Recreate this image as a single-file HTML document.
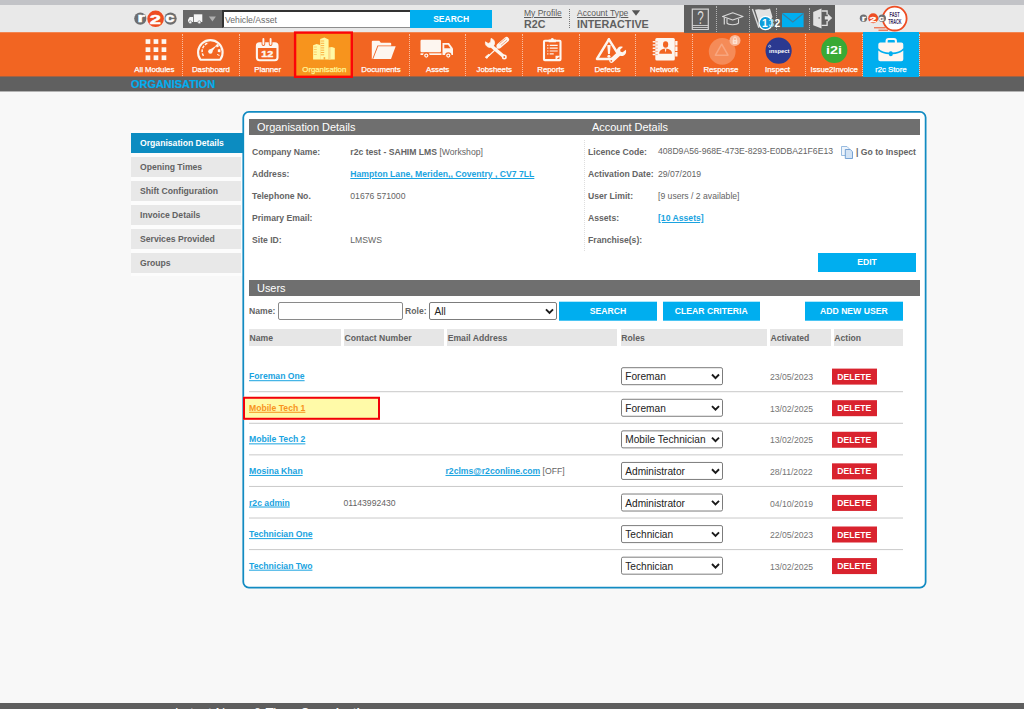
<!DOCTYPE html>
<html><head><meta charset="utf-8">
<style>
*{box-sizing:border-box;margin:0;padding:0}
html,body{width:1024px;height:709px;overflow:hidden}
body{background:#f8f8f8;font-family:"Liberation Sans",sans-serif;font-size:11px;color:#555;position:relative}
.abs{position:absolute}
#topstrip{left:0;top:0;width:1024px;height:5px;background:#c2c3c7}
#hdr{left:0;top:5px;width:1024px;height:27px;background:#e9e9e9}
#nav{left:0;top:32px;width:1024px;height:45px;background:#f26522}
#sub{left:0;top:76px;width:1024px;height:15px;background:#606060;transform:translateY(.450px)}
#sub span{-webkit-text-stroke:.2px #00aeef;position:absolute;left:131px;top:.600px;font-size:10.95px;font-weight:bold;color:#00aeef;line-height:15px}
.ni{position:absolute;top:32px;height:45px;width:56.6px;border-left:1px dotted #f9c4a6;color:#fff;text-align:center}
.ni .lb{position:absolute;left:-10px;right:-10px;bottom:3px;font-size:8.5px;line-height:10px;white-space:nowrap;letter-spacing:-0.2px}
.ni svg{position:absolute;left:50%;top:4px;transform:translateX(-50%)}
#footer{left:0;top:703.200px;width:1024px;height:6px;background:#5e5e5e;overflow:hidden}
/* sidebar */
.tab{position:absolute;left:131px;width:110px;height:20px;background:#e8e8e8;color:#626262;font-weight:bold;font-size:8.65px;line-height:21px;padding-left:9px;white-space:nowrap}
.tab.act{background:#0c8cc1;color:#fff;width:113px}
#tabsbg{left:131px;top:130px;width:112px;height:146px;background:#fcfcfc}
#panel{left:243px;top:111px;width:684px;height:478px;background:#fff;border:2px solid #1b8dc2;border-radius:8px}
.sh{position:absolute;left:249px;width:671px;height:16px;background:#6f6f6f;color:#fff;font-size:10.95px;line-height:16px}
.sh span{position:absolute;top:0}
.l{position:absolute;font-weight:bold;color:#646464;font-size:8.65px;white-space:nowrap;line-height:12px}
.v{position:absolute;color:#646464;font-size:8.65px;white-space:nowrap;line-height:12px}
a,.a{color:#1aa3e0;text-decoration:underline;font-weight:bold}
.btn{position:absolute;background:#00aeef;color:#fff;font-weight:bold;font-size:8.65px;text-align:center;white-space:nowrap}
.th{position:absolute;top:328.600px;height:17.200px;background:#e6e6e6;color:#606060;font-weight:bold;font-size:8.65px;line-height:18.600px;white-space:nowrap;padding-left:.500px}
.sep{position:absolute;left:249px;width:654px;height:1px;background:#c9c9c9}
.sel{position:absolute;left:620.800px;width:102px;height:17.700px;border:1px solid #7c7c7c;border-radius:2px;background:#fff;color:#222;font-size:10.150px;line-height:17px;padding-left:3.500px;white-space:nowrap;overflow:hidden}
.sel svg,.chev{position:absolute;right:2px;top:5px}
.del{position:absolute;left:831.800px;width:45px;height:15.700px;background:#d9232e;color:#fff;font-weight:bold;font-size:8.65px;line-height:16px;text-align:center}
.dt{position:absolute;left:770px;color:#757575;font-size:8.65px;line-height:12px}
.hs{top:8px;width:0;height:22px;border-left:1px dotted #b4b4b4}
.nd{top:33.500px;width:0;height:42px;border-left:1px dotted #f9bea2}
.nl{-webkit-text-stroke:.250px currentColor;top:64.800px;width:56.600px;text-align:center;font-size:7.850px;line-height:10px;white-space:nowrap;letter-spacing:-.05px}
.row{position:absolute;left:0;top:0;width:1024px;height:0}
</style></head><body>
<div class="abs" id="topstrip"></div>
<div class="abs" id="hdr"></div>
<div class="abs" id="nav"></div>
<div class="abs" style="left:0;top:32px;width:1024px;height:1px;background:#f3844f"></div>
<div class="abs" id="sub"><span>ORGANISATION</span></div>
<svg class="abs" style="left:130px;top:4px" width="54" height="30" viewBox="0 0 54 30">
<circle cx="10.300" cy="14.600" r="6.100" fill="#6d6e70"/><circle cx="40.500" cy="14.600" r="6.200" fill="#6d6e70"/><circle cx="25.600" cy="14.800" r="8.900" fill="#f3ebe8"/><circle cx="25.600" cy="14.800" r="8.300" fill="#ee4d23"/>
<g font-family="Liberation Sans" font-weight="bold" fill="#fff" stroke="#fff" stroke-width=".5">
<text transform="translate(7.400 18) scale(1.550 1)" font-size="12.300">r</text>
<text transform="translate(19.800 19.500) scale(1.500 1)" font-size="13.400">2</text>
<text transform="translate(35.200 18) scale(1.350 1)" font-size="12.300">c</text></g></svg>
<div class="abs" style="left:183px;top:10px;width:39px;height:17.500px;background:#676767"></div>
<svg class="abs" style="left:186px;top:12px" width="18" height="13" viewBox="0 0 18 13"><path d="M7.800 2.300h8.500v7.700H7.800z" fill="#f6f6f6"/><path d="M2 10V7.800l1.700-2.700H7v4.900z" fill="#f6f6f6"/><circle cx="4.200" cy="10.300" r="1.500" fill="#f6f6f6" stroke="#6d6e70" stroke-width=".6"/><circle cx="13.300" cy="10.300" r="1.500" fill="#f6f6f6" stroke="#6d6e70" stroke-width=".6"/></svg>
<svg class="abs" style="left:208px;top:16px" width="9" height="6" viewBox="0 0 9 6"><path d="M.9.600h7L4.400 5.600z" fill="#b0b0b0"/></svg>
<div class="abs" style="left:221.500px;top:10px;width:189px;height:17.500px;background:#fff;border:1px solid #8d8d8d;border-top:2px solid #333;border-left:2px solid #333;font-size:8.670px;color:#6a6a6a;line-height:16.500px;padding-left:1.500px">Vehicle/Asset</div>
<div class="btn" style="left:410px;top:9.500px;width:82.300px;height:18.300px;line-height:19px;font-size:8.500px">SEARCH</div>
<div class="abs" style="left:524px;top:7.500px;font-size:8.500px;line-height:10px;color:#5a5a5a;text-decoration:underline;white-space:nowrap">My Profile</div>
<div class="abs" style="left:524px;top:18px;font-size:10.700px;line-height:12px;color:#606060;font-weight:bold;white-space:nowrap">R2C</div>
<div class="abs" style="left:569px;top:9px;width:0;height:19px;border-left:1px dotted #777"></div>
<div class="abs" style="left:577px;top:7.500px;font-size:8.500px;line-height:10px;color:#5a5a5a;white-space:nowrap"><span style="text-decoration:underline">Account Type</span></div>
<svg class="abs" style="left:631px;top:10px" width="10" height="7" viewBox="0 0 10 7"><path d="M.8.200h8.400L5 5.800z" fill="#555"/></svg>
<div class="abs" style="left:577px;top:18px;font-size:10.770px;line-height:12px;color:#606060;font-weight:bold;white-space:nowrap">INTERACTIVE</div>
<div class="abs" style="left:684px;top:5.300px;width:151px;height:26.700px;background:#5f5f5f"></div>
<div class="abs hs" style="left:716px;top:5.500px;height:26.500px"></div><div class="abs hs" style="left:749px;top:5.500px;height:26.500px"></div><div class="abs hs" style="left:776px"></div><div class="abs hs" style="left:809px"></div>
<svg class="abs" style="left:684px;top:4px" width="151" height="30" viewBox="0 0 151 30">
<path d="M8.300 5.200h16v20.300h-16z" fill="none" stroke="#d4d4d4" stroke-width="1.200"/><path d="M8.300 21.500h16M8.300 23.500h16" fill="none" stroke="#d4d4d4" stroke-width=".9"/>
<text x="16.500" y="19.700" font-family="Liberation Sans" font-size="17.500" fill="#dcdcdc" text-anchor="middle" textLength="6.500" lengthAdjust="spacingAndGlyphs">?</text>
<path d="M38.500 12.600l10.200-3.900 10.300 3.900-10.300 3.400z" fill="none" stroke="#d8d8d8" stroke-width="1.100" stroke-linejoin="round"/><path d="M43 14.800v4.400c1.500 2 9.500 2 11.500 0v-4.400" fill="none" stroke="#d8d8d8" stroke-width="1.100"/><path d="M40.300 13.500v7" fill="none" stroke="#d8d8d8" stroke-width="1.200"/>
<path d="M68.400 5.100l6.500 18.600" stroke="#dadada" stroke-width="1.400" fill="none"/><path d="M71 5.800c4.500-2 9 1.500 15-1.200l2.500 8.500c-1.500 4-7 5-10.500 4.500l-3 1z" fill="#e2e2e2"/>
<circle cx="81.600" cy="19" r="6.600" fill="#0e9ddb" stroke="#fff" stroke-width="1.300"/>
<text x="78" y="22.700" font-family="Liberation Sans" font-weight="bold" font-size="10.300" fill="#fff">1</text><text x="84.600" y="22.700" font-family="Liberation Sans" font-weight="bold" font-size="10.300" fill="#9adcf7">3</text><text x="90.500" y="22.700" font-family="Liberation Sans" font-weight="bold" font-size="10.300" fill="#fff">2</text>
<rect x="98" y="9" width="21.600" height="14.200" fill="#00aeef"/><path d="M98 9.200l10.800 8.800 10.800-8.800" fill="none" stroke="#3b7f9e" stroke-width="1.100"/>
<path d="M129.200 7.900l8.300-3.300v20l-8.300-3.300z" fill="#e2e2e2"/><path d="M137.500 7h5.600v3.800M143.100 17v4.300h-5.600" fill="none" stroke="#e2e2e2" stroke-width="1.300"/><path d="M140.800 12.300h3v-2.600l4.400 4.200-4.400 4.200v-2.600h-3z" fill="#e2e2e2"/><rect x="134.500" y="13.300" width="1.300" height="1.300" fill="#5f5f5f"/></svg>
<svg class="abs" style="left:856px;top:3px" width="56" height="34" viewBox="0 0 56 34">
<circle cx="38.700" cy="15.600" r="11.900" fill="#fff" stroke="#ee4d23" stroke-width="1.800"/>
<circle cx="7.500" cy="15.200" r="3.700" fill="#6d6e70"/><circle cx="26.200" cy="15.200" r="3.800" fill="#6d6e70"/><circle cx="17.200" cy="15.300" r="5" fill="#ee4d23"/>
<g font-family="Liberation Sans" font-weight="bold" fill="#fff" stroke="#fff" stroke-width=".3">
<text transform="translate(5.800 17.700) scale(1.500 1)" font-size="7">r</text>
<text transform="translate(13.400 18.700) scale(1.550 1)" font-size="8">2</text>
<text transform="translate(22.700 17.700) scale(1.350 1)" font-size="7">c</text></g>
<text x="38.600" y="14" font-family="Liberation Sans" font-weight="bold" font-size="6.300" fill="#3a2a5a" text-anchor="middle" textLength="10" lengthAdjust="spacingAndGlyphs">FAST</text>
<text x="38.800" y="21.200" font-family="Liberation Sans" font-weight="bold" font-size="6.300" fill="#3a2a5a" text-anchor="middle" textLength="13.300" lengthAdjust="spacingAndGlyphs">TRACK</text>
<path d="M18 24.800h11.500M22.500 27.200h9.500" stroke="#ee4d23" stroke-width="1"/></svg>
<div class="abs" style="left:863px;top:32px;width:55.500px;height:44.500px;background:#00aeef"></div>
<svg class="abs" style="left:290px;top:28px" width="68" height="54" viewBox="290 28 68 54"><rect x="295.100" y="32.600" width="56.700" height="44.200" fill="#f7941d" stroke="#fb0408" stroke-width="2.400"/></svg>
<svg class="abs" style="left:126.00px;top:32px" width="56.600" height="45" viewBox="0 0 56.600 45"><rect x="19.6" y="7.2" width="4.700" height="4.700" fill="#fdf6f0"/><rect x="27.6" y="7.2" width="4.700" height="4.700" fill="#fdf6f0"/><rect x="35.6" y="7.2" width="4.700" height="4.700" fill="#fdf6f0"/><rect x="19.6" y="15.3" width="4.700" height="4.700" fill="#fdf6f0"/><rect x="27.6" y="15.3" width="4.700" height="4.700" fill="#fdf6f0"/><rect x="35.6" y="15.3" width="4.700" height="4.700" fill="#fdf6f0"/><rect x="19.6" y="23.4" width="4.700" height="4.700" fill="#fdf6f0"/><rect x="27.6" y="23.4" width="4.700" height="4.700" fill="#fdf6f0"/><rect x="35.6" y="23.4" width="4.700" height="4.700" fill="#fdf6f0"/></svg><div class="abs nl" style="left:126.00px;color:#fff">All Modules</div>
<div class="abs nd" style="left:182.16px"></div><svg class="abs" style="left:182.66px;top:32px" width="56.600" height="45" viewBox="0 0 56.600 45"><g transform="translate(-.9 .3)"><path d="M18.300 27.400a12.300 12.300 0 1 1 19.900 0z" fill="none" stroke="#fdf6f0" stroke-width="2.100" stroke-linejoin="round"/><path d="M21.400 23.600a8.600 8.600 0 0 1 5-13" fill="none" stroke="#fdf6f0" stroke-width="1.500" stroke-dasharray="2.800 1.200"/><path d="M34.300 12.500a8.600 8.600 0 0 1 1.700 10.500" fill="none" stroke="#fdf6f0" stroke-width="2.600" stroke-dasharray="2.600 2.600"/><circle cx="28.300" cy="19.200" r="2.200" fill="#fdf6f0"/><path d="M27.200 17.800l7.800-5-5.800 7.400z" fill="#fdf6f0"/></g></svg><div class="abs nl" style="left:182.66px;color:#fff">Dashboard</div>
<div class="abs nd" style="left:238.82px"></div><svg class="abs" style="left:239.32px;top:32px" width="56.600" height="45" viewBox="0 0 56.600 45"><rect x="17.900" y="11.300" width="20.600" height="16.900" rx="2.600" fill="none" stroke="#fdf6f0" stroke-width="2.100"/><path d="M17.900 16V14a2.600 2.600 0 0 1 2.600-2.600h15.400a2.600 2.600 0 0 1 2.600 2.600v2z" fill="#fdf6f0"/><path d="M24.400 7.300v5M31.600 7.300v5" stroke="#f26522" stroke-width="3.600" stroke-linecap="round"/><path d="M24.400 7v5M31.600 7v5" stroke="#fdf6f0" stroke-width="1.900" stroke-linecap="round"/><text x="28.300" y="24.900" font-family="Liberation Sans" font-weight="bold" font-size="9.800" fill="#fdf6f0" stroke="#fdf6f0" stroke-width=".4" text-anchor="middle" textLength="12" lengthAdjust="spacingAndGlyphs">12</text></svg><div class="abs nl" style="left:239.32px;color:#fff">Planner</div>
<svg class="abs" style="left:295.98px;top:32px" width="56.600" height="45" viewBox="0 0 56.600 45"><path d="M17.100 27.600V13.200l3.500-1.200 3.600 1v14.600z" fill="#fff9a6"/><path d="M24.200 27.600V7l4.200-1.600 4.200 2v20.200z" fill="#fff9a6"/><path d="M32.600 27.600V15.800l3.300-.8 2.900.9v11.700z" fill="#fff9a6"/><path d="M32.600 16v11.600h2V15.500z" fill="#fbd98a"/><path d="M17.800 15h3M17.800 17.500h3M17.800 20h3M17.800 22.500h3" stroke="#fbc45a" stroke-width=".8"/><path d="M24.800 9h3.400M24.800 11.300h3.400M24.800 13.600h3.400M24.800 15.900h3.400M24.800 18.200h3.400M24.800 20.500h3.400M24.800 22.800h3.400" stroke="#f9a93a" stroke-width=".9"/><path d="M27.600 27.600v-2.500h1.600v2.500z" fill="#f9a93a"/></svg><div class="abs nl" style="left:295.98px;color:#fff79a">Organisation</div>
<svg class="abs" style="left:352.64px;top:32px" width="56.600" height="45" viewBox="0 0 56.600 45"><path d="M18.800 27V9.800a1 1 0 0 1 1-1h6.500l1.500 2h9.400a1 1 0 0 1 1 1v1.700H24.500l-5.200 13.500z" fill="#fdf6f0"/><path d="M25.200 14.300h17.500l-4.700 12.700H20.200z" fill="#fdf6f0"/></svg><div class="abs nl" style="left:352.64px;color:#fff">Documents</div>
<div class="abs nd" style="left:408.80px"></div><svg class="abs" style="left:409.30px;top:32px" width="56.600" height="45" viewBox="0 0 56.600 45"><rect x="11.500" y="7.800" width="20.500" height="12.500" rx="1.200" fill="#fdf6f0"/><path d="M33.500 11h6.500l4 5.500v6.500h-10.500z" fill="#fdf6f0"/><path d="M35.300 12.700h3.700l2.500 3.500h-6.200z" fill="#f26522"/><path d="M11.500 21.300h21v1.700h-21z" fill="#fdf6f0"/><circle cx="17.300" cy="23.600" r="2.700" fill="#fdf6f0" stroke="#f26522" stroke-width="1.100"/><circle cx="39.300" cy="23.600" r="2.700" fill="#fdf6f0" stroke="#f26522" stroke-width="1.100"/><circle cx="17.300" cy="23.600" r=".9" fill="#f26522"/><circle cx="39.300" cy="23.600" r=".9" fill="#f26522"/></svg><div class="abs nl" style="left:409.30px;color:#fff">Assets</div>
<div class="abs nd" style="left:465.46px"></div><svg class="abs" style="left:465.96px;top:32px" width="56.600" height="45" viewBox="0 0 56.600 45"><path d="M32.700 14.500L22.700 23.900" stroke="#fdf6f0" stroke-width="1.300"/><path d="M23.600 23l-2.800 3.400-1.400-1.400 3.400-2.800z" fill="#fdf6f0" stroke="#fdf6f0" stroke-width="1"/><path d="M33 14l7.600-6.500" stroke="#fdf6f0" stroke-width="5" stroke-linecap="round"/><path d="M33.500 11.500l6-5M35 13.300l6-5M36.400 15l5.800-4.800" stroke="#f26522" stroke-width=".55"/><path d="M26 14.500L38.300 25" stroke="#fdf6f0" stroke-width="3.500" stroke-linecap="round"/><circle cx="38.300" cy="25" r="2.500" fill="#fdf6f0"/><circle cx="38.300" cy="25" r=".9" fill="#f26522"/><path d="M19.500 9.800a4.600 4.600 0 1 0 5.600-3.400l-.4 3.900-2.500 1.200z" fill="#fdf6f0" stroke="#fdf6f0" stroke-width=".8" stroke-linejoin="round"/></svg><div class="abs nl" style="left:465.96px;color:#fff">Jobsheets</div>
<div class="abs nd" style="left:522.12px"></div><svg class="abs" style="left:522.62px;top:32px" width="56.600" height="45" viewBox="0 0 56.600 45"><g transform="translate(1.200 .4)"><rect x="19.800" y="8.300" width="16.500" height="19.400" rx=".8" fill="none" stroke="#fdf6f0" stroke-width="2.100"/><path d="M24.500 9.800V7.200h2a1.600 1.600 0 0 1 3.200 0h2v2.600z" fill="#fdf6f0"/><path d="M23 13h1.200M25.500 13h8M23 15.800h1.200M25.500 15.800h8M23 18.600h1.200M25.500 18.600h8M23 21.400h1.200M25.500 21.400h4" stroke="#fdf6f0" stroke-width="1.200"/><path d="M31.300 27.700v-4.400h5z" fill="#fdf6f0"/></g></svg><div class="abs nl" style="left:522.62px;color:#fff">Reports</div>
<div class="abs nd" style="left:578.78px"></div><svg class="abs" style="left:579.28px;top:32px" width="56.600" height="45" viewBox="0 0 56.600 45"><path d="M29.900 7.400L18 26.900h17" fill="none" stroke="#fdf6f0" stroke-width="2.500" stroke-linejoin="round" stroke-linecap="round"/><path d="M29.900 7.400l8 12.800" fill="none" stroke="#fdf6f0" stroke-width="2.500" stroke-linecap="round"/><path d="M28.300 13h3.300l-.7 9h-1.900z" fill="#fdf6f0"/><circle cx="29.900" cy="24.300" r="1.500" fill="#fdf6f0"/><path d="M46.800 17.800c.7 1.700.3 3.700-1 5-1.300 1.300-3.100 1.600-4.700 1l-7.300 6.600a2.300 2.300 0 0 1-3.200-3.200l7.300-6.600c-.6-1.600-.2-3.400 1-4.700 1.300-1.300 3.300-1.700 5-1l-2.800 2.800.5 2 2 .5z" fill="#fdf6f0"/><circle cx="32.300" cy="28.800" r=".9" fill="#f26522"/></svg><div class="abs nl" style="left:579.28px;color:#fff">Defects</div>
<div class="abs nd" style="left:635.44px"></div><svg class="abs" style="left:635.94px;top:32px" width="56.600" height="45" viewBox="0 0 56.600 45"><rect x="19.300" y="6" width="19.500" height="22.500" rx="1.500" fill="#fdf6f0"/><path d="M39.200 9h2.300v4.500h-2.300zM39.200 14.500h2.300v4.500h-2.300zM39.200 20h2.300v4.500h-2.300z" fill="#fdf6f0"/><path d="M17.300 9.800h4M17.300 13h4M17.300 16.200h4M17.300 19.400h4M17.300 22.600h4" stroke="#fdf6f0" stroke-width="1.500" stroke-linecap="round"/><path d="M19.300 9.800h2.500M19.300 13h2.500M19.300 16.200h2.500M19.300 19.400h2.500M19.300 22.600h2.500" stroke="#f26522" stroke-width=".5"/><ellipse cx="29.600" cy="12.500" rx="2.600" ry="3.300" fill="#f26522"/><path d="M23.200 21.800c0-3.500 2.500-5 6.400-5s6.400 1.500 6.400 5z" fill="#f26522"/><path d="M29.600 16.800l-.8.800.8 3 .8-3z" fill="#fdf6f0"/></svg><div class="abs nl" style="left:635.94px;color:#fff">Network</div>
<div class="abs nd" style="left:692.10px"></div><svg class="abs" style="left:692.60px;top:32px" width="56.600" height="45" viewBox="0 0 56.600 45"><circle cx="29.200" cy="19.400" r="13.400" fill="#f58b58"/><path d="M28.700 12.200l6.300 11h-12.600z" fill="none" stroke="#f8a67f" stroke-width="1.500" stroke-linejoin="round"/><circle cx="42" cy="8.400" r="5.500" fill="#f9b898"/><rect x="39.700" y="8" width="4.600" height="3.900" rx=".6" fill="#fde3d4"/><path d="M40.600 8V6.500a1.400 1.400 0 0 1 2.800 0V8" fill="none" stroke="#fde3d4" stroke-width=".9"/><rect x="41.500" y="9" width="1" height="1.800" fill="#f9b898"/></svg><div class="abs nl" style="left:692.60px;color:#fff">Response</div>
<div class="abs nd" style="left:748.76px"></div><svg class="abs" style="left:749.26px;top:32px" width="56.600" height="45" viewBox="0 0 56.600 45"><circle cx="29.600" cy="18.700" r="13.100" fill="#2b3990"/><text x="30.300" y="21" font-family="Liberation Sans" font-weight="bold" font-size="6.200" fill="#fff" text-anchor="middle" textLength="20.500" lengthAdjust="spacingAndGlyphs">ınspect</text><circle cx="20.700" cy="14.300" r="1.100" fill="none" stroke="#fff" stroke-width=".6"/></svg><div class="abs nl" style="left:749.26px;color:#fff">Inspect</div>
<div class="abs nd" style="left:805.42px"></div><svg class="abs" style="left:805.92px;top:32px" width="56.600" height="45" viewBox="0 0 56.600 45"><circle cx="28.300" cy="17.900" r="13.100" fill="#39a935"/><text x="28.100" y="21.600" font-family="Liberation Sans" font-weight="bold" font-size="10.600" fill="#fff" text-anchor="middle" textLength="16" lengthAdjust="spacingAndGlyphs">i2i</text></svg><div class="abs nl" style="left:805.92px;color:#fff">Issue2Invoice</div>
<div class="abs nd" style="left:862.08px"></div><svg class="abs" style="left:862.58px;top:32px" width="56.600" height="45" viewBox="0 0 56.600 45"><path d="M23.600 11.500V9a2 2 0 0 1 2-2h5.300a2 2 0 0 1 2 2v2.500" fill="none" stroke="#fdf6f0" stroke-width="2.100"/><path d="M15.300 12.600a2 2 0 0 1 2-2h21a2 2 0 0 1 2 2v3.600c-2.500 3-7 4.300-10.600 4.400a2 2 0 0 0-3.800 0c-3.600-.1-8.100-1.400-10.600-4.400z" fill="#fdf6f0"/><path d="M15.300 18.600c3 2.600 7 3.500 10.500 3.700a2 2 0 0 0 4 0c3.500-.2 7.500-1.100 10.500-3.700v8.600a2 2 0 0 1-2 2h-21a2 2 0 0 1-2-2z" fill="#fdf6f0"/></svg><div class="abs nl" style="left:862.58px;color:#fff">r2c Store</div>
<div class="abs nd" style="left:919.14px;border-color:#a8e0f8"></div>
<div class="abs" id="tabsbg"></div>
<svg class="abs" style="left:0;top:0" width="1024" height="709"><rect x="243.275" y="111.875" width="682.350" height="475.750" rx="5.600" fill="#fff" stroke="#128bc2" stroke-width="1.750"/></svg>
<div class="tab act" style="top:133px">Organisation Details</div>
<div class="tab" style="top:157px">Opening Times</div>
<div class="tab" style="top:181px">Shift Configuration</div>
<div class="tab" style="top:205px">Invoice Details</div>
<div class="tab" style="top:229px">Services Provided</div>
<div class="tab" style="top:253px">Groups</div>

<div class="sh" style="top:119px"><span style="left:8px">Organisation Details</span><span style="left:343px">Account Details</span></div>
<div class="l" style="left:252px;top:146px">Company Name:</div>
<div class="l" style="left:252px;top:168px">Address:</div>
<div class="l" style="left:252px;top:190px">Telephone No.</div>
<div class="l" style="left:252px;top:212px">Primary Email:</div>
<div class="l" style="left:252px;top:234px">Site ID:</div>
<div class="v" style="left:350.300px;top:146px"><b>r2c test - SAHIM LMS</b> [Workshop]</div>
<div class="v" style="left:350.300px;top:168px"><span class="a">Hampton Lane, Meriden,, Coventry , CV7 7LL</span></div>
<div class="v" style="left:350.300px;top:190px">01676 571000</div>
<div class="v" style="left:350.300px;top:234px">LMSWS</div>
<div class="abs" style="left:584px;top:140px;width:0;height:111px;border-left:1px dotted #dedede"></div>
<div class="l" style="left:588px;top:146px">Licence Code:</div>
<div class="l" style="left:588px;top:168px">Activation Date:</div>
<div class="l" style="left:588px;top:190px">User Limit:</div>
<div class="l" style="left:588px;top:212px">Assets:</div>
<div class="l" style="left:588px;top:234px">Franchise(s):</div>
<div class="v" style="left:658px;top:145px">408D9A56-968E-473E-8293-E0DBA21F6E13</div>
<svg class="abs" style="left:840px;top:144.500px" width="14" height="15" viewBox="0 0 14 15"><path d="M1.500 1.500h5.500l2 2v7h-7.500z" fill="#eef4fb" stroke="#8fb4dc" stroke-width=".9"/><path d="M5.300 4.500h5l2.200 2.200v6.800h-7.200z" fill="#d3e3f4" stroke="#6b9bd0" stroke-width=".9"/></svg>
<div class="l" style="left:856px;top:146px">| Go to Inspect</div>
<div class="v" style="left:658px;top:168px">29/07/2019</div>
<div class="v" style="left:658px;top:190px">[9 users / 2 available]</div>
<div class="v" style="left:658px;top:212px"><span class="a">[10 Assets]</span></div>
<div class="btn" style="left:818px;top:253px;width:98px;height:19px;line-height:19px">EDIT</div>

<div class="sh" style="top:280px"><span style="left:8px">Users</span></div>
<div class="l" style="left:249px;top:305px">Name:</div>
<div class="abs" style="left:278px;top:302px;width:125px;height:18px;border:1px solid #8a8a8a;border-radius:2px;background:#fff"></div>
<div class="l" style="left:405px;top:305px">Role:</div>
<div class="sel" style="left:429px;top:302px;width:128px;padding-left:4.500px">All<svg class="chev" width="9" height="7" viewBox="0 0 9 7"><path d="M1 1.300l3.500 3.600 3.500-3.600" fill="none" stroke="#1a1a1a" stroke-width="1.900"/></svg></div>
<div class="btn" style="left:559.300px;top:301.800px;width:97.500px;height:19px;line-height:19.500px;transform:translateY(-.300px)">SEARCH</div>
<div class="btn" style="left:662.600px;top:301.800px;width:97.300px;height:19px;line-height:19.500px;transform:translateY(-.300px)">CLEAR CRITERIA</div>
<div class="btn" style="left:805px;top:301.800px;width:97.700px;height:19px;line-height:19.500px;transform:translateY(-.300px)">ADD NEW USER</div>
<div class="th" style="left:249px;width:92px">Name</div>
<div class="th" style="left:344px;width:100px">Contact Number</div>
<div class="th" style="left:447.200px;width:170.300px">Email Address</div>
<div class="th" style="left:620.800px;width:146.200px">Roles</div>
<div class="th" style="left:770px;width:60.800px">Activated</div>
<div class="th" style="left:833.800px;width:69px">Action</div>
<div class="row" style="transform:translateY(376.20px)">
<div class="v" style="left:249px;top:-5.800px"><span class="a">Foreman One</span></div>
<div class="sel" style="top:-9px">Foreman<svg class="chev" width="9" height="7" viewBox="0 0 9 7"><path d="M1 1.300l3.500 3.600 3.500-3.600" fill="none" stroke="#1a1a1a" stroke-width="1.900"/></svg></div>
<div class="dt" style="top:-5px">23/05/2023</div>
<div class="del" style="top:-8px;transform:translateY(.400px)">DELETE</div>
<div class="sep" style="top:15px"></div>
</div>
<div class="row" style="transform:translateY(407.78px)">
<div class="abs" style="left:243px;top:-10.800px;width:137.300px;height:22.800px;background:#fffaa8;border:2.200px solid #f2000a"></div>
<div class="v" style="left:249px;top:-5.800px"><span class="a" style="color:#f7941d">Mobile Tech 1</span></div>
<div class="sel" style="top:-9px">Foreman<svg class="chev" width="9" height="7" viewBox="0 0 9 7"><path d="M1 1.300l3.500 3.600 3.500-3.600" fill="none" stroke="#1a1a1a" stroke-width="1.900"/></svg></div>
<div class="dt" style="top:-5px">13/02/2025</div>
<div class="del" style="top:-8px;transform:translateY(.400px)">DELETE</div>
<div class="sep" style="top:15px"></div>
</div>
<div class="row" style="transform:translateY(439.36px)">
<div class="v" style="left:249px;top:-5.800px"><span class="a">Mobile Tech 2</span></div>
<div class="sel" style="top:-9px">Mobile Technician<svg class="chev" width="9" height="7" viewBox="0 0 9 7"><path d="M1 1.300l3.500 3.600 3.500-3.600" fill="none" stroke="#1a1a1a" stroke-width="1.900"/></svg></div>
<div class="dt" style="top:-5px">13/02/2025</div>
<div class="del" style="top:-8px;transform:translateY(.400px)">DELETE</div>
<div class="sep" style="top:15px"></div>
</div>
<div class="row" style="transform:translateY(470.94px)">
<div class="v" style="left:249px;top:-5.800px"><span class="a">Mosina Khan</span></div>
<div class="v" style="left:445.500px;top:-5.800px"><span class="a">r2clms@r2conline.com</span> [OFF]</div>
<div class="sel" style="top:-9px">Administrator<svg class="chev" width="9" height="7" viewBox="0 0 9 7"><path d="M1 1.300l3.500 3.600 3.500-3.600" fill="none" stroke="#1a1a1a" stroke-width="1.900"/></svg></div>
<div class="dt" style="top:-5px">28/11/2022</div>
<div class="del" style="top:-8px;transform:translateY(.400px)">DELETE</div>
<div class="sep" style="top:15px"></div>
</div>
<div class="row" style="transform:translateY(502.52px)">
<div class="v" style="left:249px;top:-5.800px"><span class="a">r2c admin</span></div>
<div class="v" style="left:343.500px;top:-5.800px">01143992430</div>
<div class="sel" style="top:-9px">Administrator<svg class="chev" width="9" height="7" viewBox="0 0 9 7"><path d="M1 1.300l3.500 3.600 3.500-3.600" fill="none" stroke="#1a1a1a" stroke-width="1.900"/></svg></div>
<div class="dt" style="top:-5px">04/10/2019</div>
<div class="del" style="top:-8px;transform:translateY(.400px)">DELETE</div>
<div class="sep" style="top:15px"></div>
</div>
<div class="row" style="transform:translateY(534.10px)">
<div class="v" style="left:249px;top:-5.800px"><span class="a">Technician One</span></div>
<div class="sel" style="top:-9px">Technician<svg class="chev" width="9" height="7" viewBox="0 0 9 7"><path d="M1 1.300l3.500 3.600 3.500-3.600" fill="none" stroke="#1a1a1a" stroke-width="1.900"/></svg></div>
<div class="dt" style="top:-5px">22/05/2023</div>
<div class="del" style="top:-8px;transform:translateY(.400px)">DELETE</div>
<div class="sep" style="top:15px"></div>
</div>
<div class="row" style="transform:translateY(565.68px)">
<div class="v" style="left:249px;top:-5.800px"><span class="a">Technician Two</span></div>
<div class="sel" style="top:-9px">Technician<svg class="chev" width="9" height="7" viewBox="0 0 9 7"><path d="M1 1.300l3.500 3.600 3.500-3.600" fill="none" stroke="#1a1a1a" stroke-width="1.900"/></svg></div>
<div class="dt" style="top:-5px">13/02/2025</div>
<div class="del" style="top:-8px;transform:translateY(.400px)">DELETE</div>
</div>
<div class="abs" style="left:684px;top:32px;width:151px;height:1px;background:#6b625e"></div>
<div class="abs" id="footer"><span style="position:absolute;left:175px;top:2.500px;font-size:13.500px;line-height:14px;color:#fff;white-space:pre">Latest News &amp; Tips:</span><span style="position:absolute;left:300.500px;top:2.500px;font-size:12px;font-weight:bold;line-height:14px;color:#fff;white-space:pre">Organisation</span></div>
</body></html>
